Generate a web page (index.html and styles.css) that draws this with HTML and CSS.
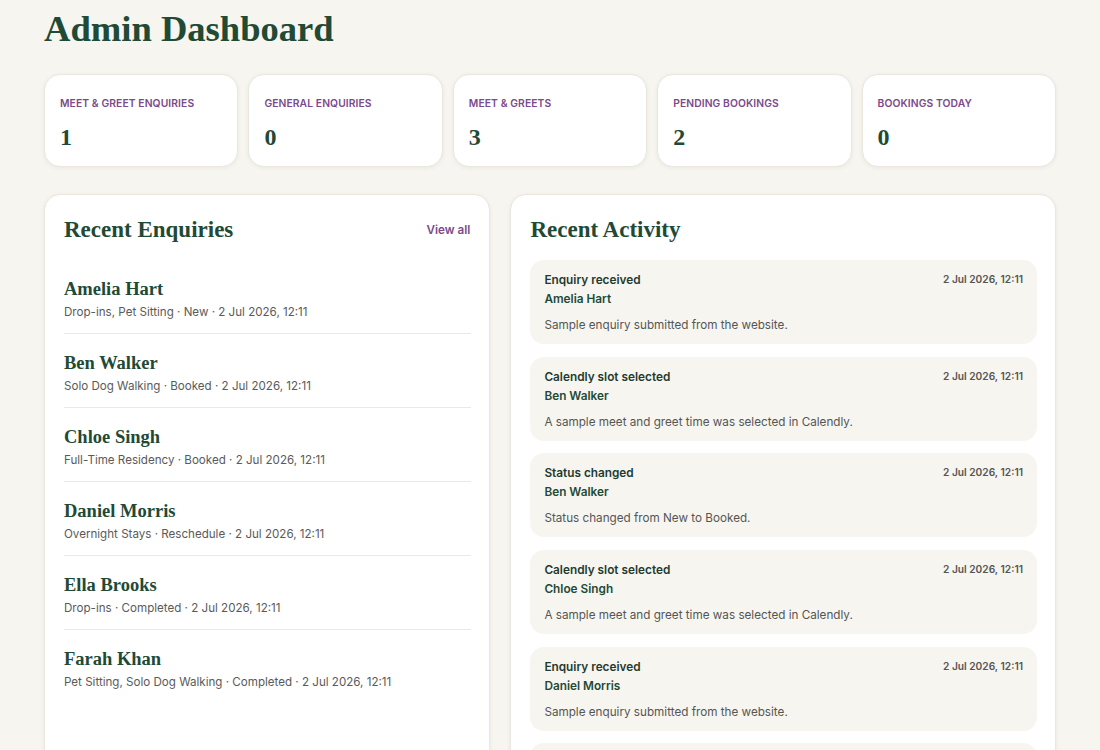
FILE: index.html
```html
<!DOCTYPE html>
<html lang="en">
<head>
<meta charset="utf-8">
<title>Admin Dashboard</title>
<link rel="stylesheet" href="styles.css">
</head>
<body>
<main class="page">
  <h1 class="page-title">Admin Dashboard</h1>

  <section class="stats">
    <div class="stat"><div class="stat-label">Meet &amp; Greet Enquiries</div><div class="stat-value">1</div></div>
    <div class="stat"><div class="stat-label">General Enquiries</div><div class="stat-value">0</div></div>
    <div class="stat"><div class="stat-label">Meet &amp; Greets</div><div class="stat-value">3</div></div>
    <div class="stat"><div class="stat-label">Pending Bookings</div><div class="stat-value">2</div></div>
    <div class="stat"><div class="stat-label">Bookings Today</div><div class="stat-value">0</div></div>
  </section>

  <section class="panels">
    <div class="panel">
      <div class="panel-head">
        <h2 class="panel-title">Recent Enquiries</h2>
        <a class="view-all" href="#">View all</a>
      </div>
      <ul class="enquiries">
        <li class="enquiry"><div class="enq-name">Amelia Hart</div><div class="enq-meta">Drop-ins, Pet Sitting · New · 2 Jul 2026, 12:11</div></li>
        <li class="enquiry"><div class="enq-name">Ben Walker</div><div class="enq-meta">Solo Dog Walking · Booked · 2 Jul 2026, 12:11</div></li>
        <li class="enquiry"><div class="enq-name">Chloe Singh</div><div class="enq-meta">Full-Time Residency · Booked · 2 Jul 2026, 12:11</div></li>
        <li class="enquiry"><div class="enq-name">Daniel Morris</div><div class="enq-meta">Overnight Stays · Reschedule · 2 Jul 2026, 12:11</div></li>
        <li class="enquiry"><div class="enq-name">Ella Brooks</div><div class="enq-meta">Drop-ins · Completed · 2 Jul 2026, 12:11</div></li>
        <li class="enquiry"><div class="enq-name">Farah Khan</div><div class="enq-meta">Pet Sitting, Solo Dog Walking · Completed · 2 Jul 2026, 12:11</div></li>
      </ul>
    </div>

    <div class="panel">
      <div class="panel-head">
        <h2 class="panel-title">Recent Activity</h2>
      </div>
      <ul class="activity">
        <li class="act">
          <div class="act-top"><div class="act-type">Enquiry received</div><div class="act-date">2 Jul 2026, 12:11</div></div>
          <div class="act-name">Amelia Hart</div>
          <div class="act-desc">Sample enquiry submitted from the website.</div>
        </li>
        <li class="act">
          <div class="act-top"><div class="act-type">Calendly slot selected</div><div class="act-date">2 Jul 2026, 12:11</div></div>
          <div class="act-name">Ben Walker</div>
          <div class="act-desc">A sample meet and greet time was selected in Calendly.</div>
        </li>
        <li class="act">
          <div class="act-top"><div class="act-type">Status changed</div><div class="act-date">2 Jul 2026, 12:11</div></div>
          <div class="act-name">Ben Walker</div>
          <div class="act-desc">Status changed from New to Booked.</div>
        </li>
        <li class="act">
          <div class="act-top"><div class="act-type">Calendly slot selected</div><div class="act-date">2 Jul 2026, 12:11</div></div>
          <div class="act-name">Chloe Singh</div>
          <div class="act-desc">A sample meet and greet time was selected in Calendly.</div>
        </li>
        <li class="act">
          <div class="act-top"><div class="act-type">Enquiry received</div><div class="act-date">2 Jul 2026, 12:11</div></div>
          <div class="act-name">Daniel Morris</div>
          <div class="act-desc">Sample enquiry submitted from the website.</div>
        </li>
        <li class="act">
          <div class="act-top"><div class="act-type">Status changed</div><div class="act-date">2 Jul 2026, 12:11</div></div>
          <div class="act-name">Chloe Singh</div>
          <div class="act-desc">Status changed from New to Booked.</div>
        </li>
      </ul>
    </div>
  </section>
</main>
</body>
</html>
```

FILE: styles.css
```css
* { box-sizing: border-box; }

html, body {
  margin: 0;
  padding: 0;
  background: #f7f5f0;
}

body {
  font-family: Inter, "Noto Sans", "Liberation Sans", sans-serif;
  color: #1f4a36;
}

.page {
  padding: 7px 44px 0;
}

.page-title {
  font-family: "Liberation Serif", "Times New Roman", serif;
  font-weight: 700;
  font-size: 36.6px;
  line-height: 44px;
  margin: 0 0 23px;
  color: #1f4a36;
}

.stats {
  display: grid;
  grid-template-columns: repeat(5, 1fr);
  gap: 10px;
}

.stat {
  background: #fff;
  border: 1px solid #ebe7df;
  border-radius: 16px;
  box-shadow: 0 1px 4px rgba(60, 50, 30, 0.07);
  padding: 21px 15px 14px;
  height: 93px;
}

.stat-label {
  font-size: 10.3px;
  font-weight: 600;
  letter-spacing: 0.1px;
  text-transform: uppercase;
  color: #7b4a8c;
  line-height: 14px;
}

.stat-value {
  font-family: "Liberation Serif", "Times New Roman", serif;
  font-weight: 700;
  font-size: 24px;
  line-height: 30px;
  margin-top: 12px;
  color: #1f4a36;
}

.panels {
  display: grid;
  grid-template-columns: 9fr 11fr;
  gap: 20px;
  margin-top: 27px;
}

.panel {
  background: #fff;
  border: 1px solid #ebe7df;
  border-radius: 16px;
  box-shadow: 0 1px 4px rgba(60, 50, 30, 0.07);
  padding: 19px 18px 40px 19px;
  min-height: 600px;
}

.panel-head {
  display: flex;
  justify-content: space-between;
  align-items: center;
  height: 32px;
  margin-bottom: 14px;
}

.panel-title {
  font-family: "Liberation Serif", "Times New Roman", serif;
  font-weight: 700;
  font-size: 23px;
  line-height: 32px;
  margin: 0;
  color: #1f4a36;
}

.view-all {
  font-size: 11.7px;
  font-weight: 600;
  color: #7b4a8c;
  text-decoration: none;
  margin-right: 1px;
}

.enquiries, .activity {
  list-style: none;
  margin: 0;
  padding: 0;
}

.enquiry {
  padding: 17px 0 12px;
  border-bottom: 1px solid #ece9e4;
}

.enquiry:last-child {
  border-bottom: none;
}

.enq-name {
  font-family: "Liberation Serif", "Times New Roman", serif;
  font-weight: 700;
  font-size: 18.5px;
  line-height: 24px;
  color: #1f4a36;
}

.enq-meta {
  margin-top: 2px;
  font-size: 11.6px;
  line-height: 18px;
  color: #5a5a5a;
}

.activity {
  display: flex;
  flex-direction: column;
  gap: 12.7px;
}

.act {
  background: #f7f5f0;
  border-radius: 14px;
  padding: 12px 14px 11px;
  height: 84px;
}

.act-top {
  display: flex;
  justify-content: space-between;
  align-items: flex-start;
}

.act-type {
  font-size: 11.8px;
  font-weight: 600;
  line-height: 16px;
  color: #1f3b2f;
}

.act-date {
  font-size: 10.2px;
  font-weight: 600;
  line-height: 14px;
  color: #555;
}

.act-name {
  margin-top: 3px;
  font-size: 11.8px;
  font-weight: 600;
  line-height: 16px;
  color: #1f4a36;
}

.act-desc {
  margin-top: 9px;
  font-size: 11.7px;
  line-height: 18px;
  color: #555;
}
```
